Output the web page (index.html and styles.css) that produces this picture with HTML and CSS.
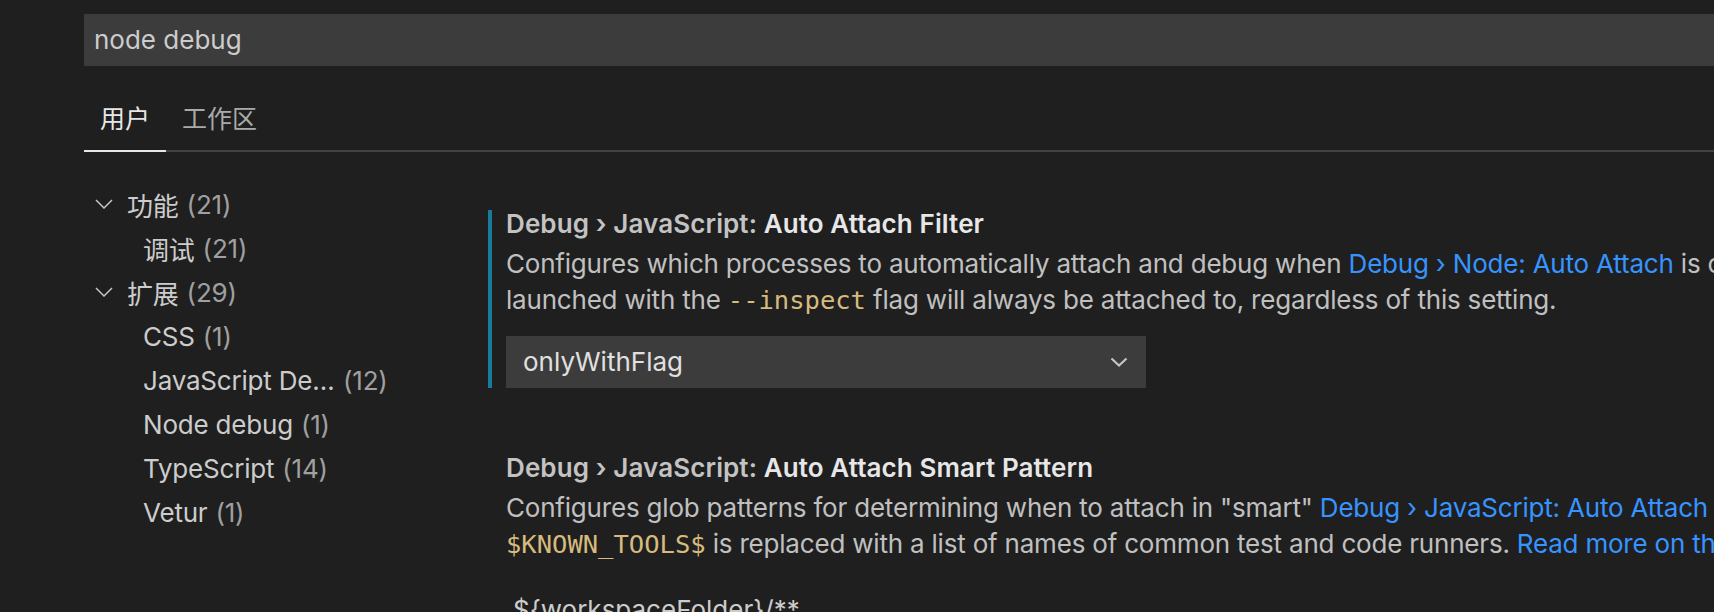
FILE: index.html
```html
<!DOCTYPE html>
<html lang="zh-CN">
<head>
<meta charset="utf-8">
<title>Settings</title>
<link rel="stylesheet" href="styles.css">
</head>
<body>
<div class="editor">
  <header class="header">
    <div class="search"><span class="search-text">node debug</span></div>
    <div class="tabs">
      <div class="tab active">用户</div>
      <div class="tab">工作区</div>
    </div>
  </header>
  <div class="body">
    <nav class="toc">
      <div class="row group">
        <svg class="twistie" width="18" height="10" viewBox="0 0 18 10"><polyline points="1,1 9,9 17,1" fill="none" stroke="#c5c5c5" stroke-width="1.5"/></svg>
        <span class="label">功能</span><span class="count">(21)</span>
      </div>
      <div class="row child"><span class="label">调试</span><span class="count">(21)</span></div>
      <div class="row group">
        <svg class="twistie" width="18" height="10" viewBox="0 0 18 10"><polyline points="1,1 9,9 17,1" fill="none" stroke="#c5c5c5" stroke-width="1.5"/></svg>
        <span class="label">扩展</span><span class="count">(29)</span>
      </div>
      <div class="row child"><span class="label">CSS</span><span class="count">(1)</span></div>
      <div class="row child"><span class="label trunc">JavaScript Debugger</span><span class="count">(12)</span></div>
      <div class="row child"><span class="label">Node debug</span><span class="count">(1)</span></div>
      <div class="row child"><span class="label">TypeScript</span><span class="count">(14)</span></div>
      <div class="row child"><span class="label">Vetur</span><span class="count">(1)</span></div>
    </nav>
    <main class="settings">
      <section class="item focused">
        <div class="title"><span class="category">Debug › JavaScript: </span><span class="name">Auto Attach Filter</span></div>
        <div class="desc">Configures which processes to automatically attach and debug when <span class="link">Debug › Node: Auto Attach</span> is on. A Node process<br>launched with the <code>--inspect</code> flag will always be attached to, regardless of this setting.</div>
        <div class="select">
          <span class="select-value">onlyWithFlag</span>
          <svg class="select-arrow" width="18" height="10" viewBox="0 0 18 10"><polyline points="1.5,1.5 9,8.5 16.5,1.5" fill="none" stroke="#c5c5c5" stroke-width="2.2"/></svg>
        </div>
      </section>
      <section class="item second">
        <div class="title"><span class="category">Debug › JavaScript: </span><span class="name">Auto Attach Smart Pattern</span></div>
        <div class="desc">Configures glob patterns for determining when to attach in "smart" <span class="link">Debug › JavaScript: Auto Attach Filter</span> mode.<br><code>$KNOWN_TOOLS$</code> is replaced with a list of names of common test and code runners. <span class="link">Read more on the VS Code docs</span>.</div>
        <div class="list-row">${workspaceFolder}/**</div>
      </section>
    </main>
  </div>
</div>
</body>
</html>
```

FILE: styles.css
```css
html, body {
  margin: 0;
  padding: 0;
  height: 100%;
  background: #1f1f1f;
  overflow: hidden;
}

.editor {
  font-family: "Inter", "Noto Sans CJK SC", sans-serif;
  font-size: 26px;
  color: #cccccc;
  width: 1714px;
  height: 612px;
  overflow: hidden;
}

.header {
  padding-left: 84px;
  padding-top: 14px;
}

.search {
  height: 52px;
  background: #3c3c3c;
  display: flex;
  align-items: center;
  padding-left: 10px;
}

.search-text {
  color: #cccccc;
  line-height: 52px;
}

.tabs {
  display: flex;
  border-bottom: 2px solid #424242;
}

.tab {
  padding: 35px 16px 13px;
  line-height: 36px;
  margin-bottom: -2px;
  border-bottom: 2px solid transparent;
  color: #a9a9a9;
  font-size: 25px;
}

.tab.active {
  color: #e7e7e7;
  border-bottom-color: #e7e7e7;
}

.body {
  display: flex;
}

.toc {
  width: 488px;
  flex: none;
  padding-top: 30px;
  letter-spacing: -0.2px;
}

.row {
  height: 44px;
  display: flex;
  align-items: center;
  white-space: nowrap;
}

.row.group {
  padding-left: 95px;
}

.row.child {
  padding-left: 143px;
}

.twistie {
  margin-right: 14px;
  flex: none;
}

.label {
  color: #cccccc;
}

.label.trunc {
  display: inline-block;
  max-width: 192px;
  overflow: hidden;
  text-overflow: ellipsis;
}

.count {
  color: #a0a0a0;
  margin-left: 8px;
}

.settings {
  flex: 1;
  padding-top: 58px;
  min-width: 0;
}

.item {
  border-left: 4px solid transparent;
  padding-left: 14px;
}

.item.focused {
  border-left-color: #197a9c;
}

.item.second {
  margin-top: 66px;
}

.title {
  line-height: 28px;
  font-weight: 600;
  white-space: nowrap;
  letter-spacing: 0.1px;
}

.category {
  color: #c3c3c3;
}

.name {
  color: #e7e7e7;
}

.desc {
  margin-top: 8px;
  line-height: 36px;
  white-space: nowrap;
  color: #c0c0c0;
  letter-spacing: -0.2px;
}

.link {
  color: #3794ff;
}

code {
  font-family: "DejaVu Sans Mono", monospace;
  font-size: 25.5px;
  letter-spacing: 0;
  color: #d7ba7d;
}

.select {
  margin-top: 18px;
  width: 640px;
  height: 52px;
  background: #3c3c3c;
  display: flex;
  align-items: center;
  justify-content: space-between;
  padding: 0 18px 0 17px;
  box-sizing: border-box;
}

.select-value {
  color: #e0e0e0;
  line-height: 52px;
}

.select-arrow {
  flex: none;
}

.list-row {
  margin-top: 30px;
  padding-left: 7px;
  line-height: 36px;
  color: #cccccc;
}
```
